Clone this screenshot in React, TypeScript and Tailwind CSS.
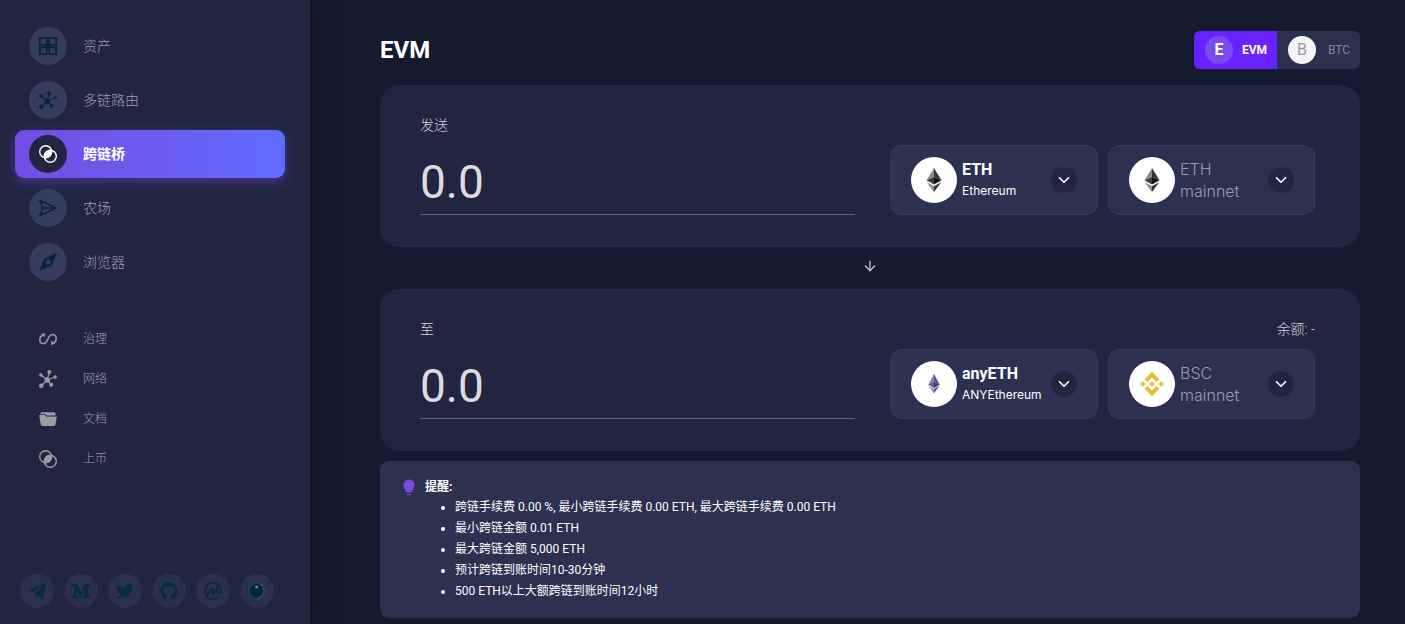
import { useState } from 'react';
import type { ReactNode } from 'react';
import { ArrowDown, ChevronDown } from 'lucide-react';
import { FaGithub, FaTelegramPlane, FaTwitter } from 'react-icons/fa';
import { SiBinance, SiCoinmarketcap } from 'react-icons/si';
import clsx from 'clsx';

const AssetsIcon = () => (
  <svg viewBox="0 0 18 18" className="w-[18px] h-[18px]" fill="none" stroke="currentColor" strokeWidth="1.7">
    <rect x="0.85" y="0.85" width="6.9" height="6.9" />
    <rect x="10.25" y="0.85" width="6.9" height="6.9" />
    <rect x="0.85" y="10.25" width="6.9" height="6.9" />
    <rect x="10.25" y="10.25" width="6.9" height="6.9" />
    <path d="M7.7 7.7L8.6 8.6M10.3 7.7L9.4 8.6M7.7 10.3L8.6 9.4M10.3 10.3L9.4 9.4" />
  </svg>
);

const NetworkIcon = () => (
  <svg viewBox="0 0 18 18" className="w-[18px] h-[18px]" fill="currentColor">
    <path
      d="M8.2 10L10.3 2M8.2 10L2 5M8.2 10L16 7M8.2 10L2.2 16M8.2 10L12.3 14.8"
      stroke="currentColor"
      strokeWidth="1.2"
    />
    <circle cx="8.2" cy="10" r="2.8" />
    <circle cx="10.3" cy="2" r="2" />
    <circle cx="1.9" cy="5" r="1.8" />
    <circle cx="16.2" cy="7" r="1.7" />
    <circle cx="2.2" cy="15.8" r="2.2" />
    <circle cx="12.3" cy="14.8" r="2" />
  </svg>
);

const BridgeIcon = () => (
  <svg viewBox="0 0 18 18" className="w-[18px] h-[18px]" fill="none" stroke="currentColor" strokeWidth="1.4">
    <circle cx="6.7" cy="6.7" r="6" />
    <circle cx="11.3" cy="11.3" r="6" />
    <path d="M5.4 12.6A6 6 0 0 1 12.6 5.4A6 6 0 0 1 5.4 12.6Z" fill="currentColor" stroke="none" />
  </svg>
);

const FarmIcon = () => (
  <svg viewBox="0 0 18 18" className="w-[18px] h-[18px]" fill="none" stroke="currentColor" strokeWidth="1.6" strokeLinejoin="round">
    <path d="M0.8 1.2L17.2 9L0.8 16.8L3.8 9Z" />
    <path d="M3.8 9H17" />
  </svg>
);

const CompassIcon = () => (
  <svg viewBox="0 0 18 18" className="w-[18px] h-[18px]" fill="currentColor">
    <path
      fillRule="evenodd"
      d="M18 0L12.8 12.4L0 18L5.2 5.6ZM9 6.5A2.5 2.5 0 1 0 9 11.5A2.5 2.5 0 1 0 9 6.5Z"
    />
  </svg>
);

const GovernanceIcon = () => (
  <svg viewBox="0 0 18 18" className="w-[18px] h-[18px]" fill="none" stroke="currentColor" strokeWidth="1.5">
    <path d="M4 5.2C1.9 5.8 0.8 7.6 0.8 9.6C0.8 12 2.4 13.7 4.5 13.7C9.4 13.7 8.4 4.5 13.4 4.5C15.7 4.5 17.2 6.3 17.2 8.7C17.2 10.9 16 12.4 14.2 12.9" />
    <path d="M2.6 4.2L6 3.6L5.2 6.8ZM12.4 11.2L15.8 13.2L12.6 14.8Z" fill="currentColor" strokeWidth="0.6" />
  </svg>
);

const FolderIcon = () => (
  <svg viewBox="0 0 18 18" className="w-[18px] h-[18px]" fill="currentColor">
    <path d="M1.5 4.6V3.6Q1.5 2.2 2.9 2.2H15Q16.6 2.2 16.6 3.8V5.4H7.4L6.2 4Z" />
    <path d="M0.2 5H5.8L7.2 6.4H17.8L16.4 14.6Q16.1 16 14.8 16H3.3Q2 16 1.7 14.6Z" />
  </svg>
);

const MediumIcon = () => (
  <svg viewBox="0 0 18 18" className="w-[18px] h-[18px]" fill="currentColor">
    <path d="M0 2H5.4L9 10.2L12.6 2H18V4.6H16V13.4H18V16H11V13.4H12.6V6.6L8.8 15.4H8L4.2 6.6V13.4H6V16H0V13.4H2V4.6H0Z" />
  </svg>
);

const OrbIcon = () => (
  <svg viewBox="0 0 18 18" className="w-[18px] h-[18px]">
    <circle cx="9" cy="9" r="8.4" fill="#123447" stroke="#2c4456" strokeWidth="0.9" />
    <circle cx="8.4" cy="8.6" r="6.4" fill="#06283c" />
    <path d="M14.8 5A7 7 0 0 1 9 16" fill="none" stroke="#35505f" strokeWidth="1.2" />
    <circle cx="8.6" cy="5" r="1.6" fill="#5f8590" />
    <circle cx="14" cy="3.4" r="0.8" fill="#4e6d7a" />
  </svg>
);

const BulbIcon = () => (
  <svg viewBox="0 0 12 17" className="w-3 h-[17px]" fill="#7749e0">
    <path d="M6 0.4A5.6 5.6 0 0 1 11.6 6C11.6 9 9.3 10.3 8.8 13.6H3.2C2.7 10.3 0.4 9 0.4 6A5.6 5.6 0 0 1 6 0.4Z" />
    <rect x="3.6" y="15" width="4.8" height="1.2" />
  </svg>
);

const EthLogo = () => (
  <svg viewBox="0 0 16 24" className="w-4 h-6">
    <path d="M8 0L0.5 12.3L8 9Z" fill="#8a8a8a" />
    <path d="M8 0L15.5 12.3L8 9Z" fill="#383838" />
    <path d="M0.5 12.3L8 9V16.6Z" fill="#3d3d3d" />
    <path d="M15.5 12.3L8 9V16.6Z" fill="#121212" />
    <path d="M0.5 14L8 18.3V24Z" fill="#8a8a8a" />
    <path d="M15.5 14L8 18.3V24Z" fill="#383838" />
  </svg>
);

const AnyEthLogo = () => (
  <svg viewBox="0 0 12 20" className="w-3 h-5">
    <path d="M6 0L0.2 10.4L6 7.8Z" fill="#8086ab" />
    <path d="M6 0L11.8 10.4L6 7.8Z" fill="#565b86" />
    <path d="M0.2 10.4L6 7.8V14Z" fill="#5b608a" />
    <path d="M11.8 10.4L6 7.8V14Z" fill="#3a3e68" />
    <path d="M0.2 11.4L6 14.8V19.6Z" fill="#8f94b8" />
    <path d="M11.8 11.4L6 14.8V19.6Z" fill="#5f648e" />
  </svg>
);

const mainLinks = [
  { id: 'assets', label: '资产', icon: <AssetsIcon /> },
  { id: 'router', label: '多链路由', icon: <NetworkIcon /> },
  { id: 'bridge', label: '跨链桥', icon: <BridgeIcon /> },
  { id: 'farm', label: '农场', icon: <FarmIcon /> },
  { id: 'explorer', label: '浏览器', icon: <CompassIcon /> },
];

const moreLinks = [
  { id: 'governance', label: '治理', icon: <GovernanceIcon /> },
  { id: 'network', label: '网络', icon: <NetworkIcon /> },
  { id: 'docs', label: '文档', icon: <FolderIcon /> },
  { id: 'listing', label: '上币', icon: <BridgeIcon /> },
];

const socials = [
  { name: 'Telegram', icon: <FaTelegramPlane size={20} /> },
  { name: 'Medium', icon: <MediumIcon /> },
  { name: 'Twitter', icon: <FaTwitter size={18} /> },
  { name: 'GitHub', icon: <FaGithub size={18} /> },
  { name: 'CoinMarketCap', icon: <SiCoinmarketcap size={18} /> },
  { name: 'Explorer', icon: <OrbIcon /> },
];

const reminders = [
  '跨链手续费 0.00 %, 最小跨链手续费 0.00 ETH, 最大跨链手续费 0.00 ETH',
  '最小跨链金额 0.01 ETH',
  '最大跨链金额 5,000 ETH',
  '预计跨链到账时间10-30分钟',
  '500 ETH以上大额跨链到账时间12小时',
];

const Sidebar = () => {
  const [active, setActive] = useState('bridge');

  return (
    <aside className="w-[310px] shrink-0 flex flex-col pt-[22px] pb-4 bg-[#212540] shadow-[0_0_30px_rgba(0,0,0,0.3)]">
      <nav className="flex flex-col px-[15px] mr-[10px]">
        <ul className="flex flex-col gap-1.5">
          {mainLinks.map(link => (
            <li key={link.id}>
              <a
                href={`#${link.id}`}
                onClick={() => setActive(link.id)}
                className={clsx(
                  'flex items-center gap-4 h-12 px-3.5 rounded-[9px] text-sm',
                  active === link.id
                    ? 'bg-gradient-to-r from-[#734ce2] to-[#606bff] text-white font-bold shadow-[0_4px_12px_rgba(115,76,226,0.45)]'
                    : 'font-light text-[#9c9fab]'
                )}
              >
                <span
                  className={clsx(
                    'flex items-center justify-center w-[38px] h-[38px] rounded-full',
                    active === link.id ? 'bg-[#212540] text-white' : 'bg-[#353c5e] text-[#062536]'
                  )}
                >
                  {link.icon}
                </span>
                {link.label}
              </a>
            </li>
          ))}
        </ul>
        <ul className="mt-[33px]">
          {moreLinks.map(link => (
            <li key={link.id}>
              <a href={`#${link.id}`} className="flex items-center gap-4 h-10 px-3.5 font-light text-xs text-[#9c9fab]">
                <span className="flex justify-center w-[38px] text-[#9a9ca3]">{link.icon}</span>
                {link.label}
              </a>
            </li>
          ))}
        </ul>
      </nav>
      <div className="flex gap-2.5 mt-auto px-5">
        {socials.map(social => (
          <a
            key={social.name}
            href="#"
            aria-label={social.name}
            className="flex items-center justify-center w-[34px] h-[34px] rounded-full bg-[#2b304d] text-[#062c40]"
          >
            {social.icon}
          </a>
        ))}
      </div>
    </aside>
  );
};

const ModeSwitch = ({ mode, onChange }: { mode: string; onChange: (mode: string) => void }) => (
  <div className="flex rounded-md overflow-hidden bg-[#2b304d]">
    {['EVM', 'BTC'].map(item => (
      <button
        key={item}
        type="button"
        onClick={() => onChange(item)}
        className={clsx(
          'flex items-center justify-between w-[83px] h-[38px] pl-[11px] pr-2.5 text-xs',
          mode === item ? 'bg-[#6822ff] text-white font-bold' : 'text-[#848792]'
        )}
      >
        <span
          className={clsx(
            'flex items-center justify-center w-7 h-7 rounded-full text-base',
            mode === item ? 'bg-[#7a4bea]' : 'bg-[#f5f5f7] text-[#9a9a9a]'
          )}
        >
          {item[0]}
        </span>
        {item}
      </button>
    ))}
  </div>
);

interface PickerProps {
  logo: ReactNode;
  title: string;
  subtitle: string;
  muted?: boolean;
}

const Picker = ({ logo, title, subtitle, muted }: PickerProps) => (
  <button
    type="button"
    aria-haspopup="listbox"
    className={clsx(
      'flex items-center h-[70px] px-5 rounded-xl border border-[#363d5e] bg-[#2b314f] text-left',
      muted ? 'w-[207px]' : 'w-[208px]'
    )}
  >
    <span className="flex items-center justify-center shrink-0 w-[46px] h-[46px] rounded-full bg-white">{logo}</span>
    <span className={clsx('flex-1 ml-[5px]', muted ? "font-['Inter'] font-light text-[#9a9cab]" : 'text-white')}>
      <span className={clsx('block text-base leading-[22px]', !muted && 'font-bold')}>{title}</span>
      <span className={clsx("block font-['Inter']", muted ? 'text-base leading-[22px]' : 'text-xs leading-5')}>
        {subtitle}
      </span>
    </span>
    <span className="flex items-center justify-center shrink-0 w-[26px] h-[26px] rounded-full bg-[#212540] text-white">
      <ChevronDown size={18} strokeWidth={2.2} />
    </span>
  </button>
);

interface AmountCardProps {
  id: string;
  label: string;
  balance?: string;
  children: ReactNode;
}

const AmountCard = ({ id, label, balance, children }: AmountCardProps) => (
  <section className="pt-[30px] pr-[45px] pb-8 pl-10 rounded-[20px] bg-[#212540]">
    <div className="flex justify-between font-light text-sm leading-5 text-[#d3d4da]">
      <label htmlFor={id}>{label}</label>
      {balance && <span>{balance}</span>}
    </div>
    <div className="flex gap-2.5 mt-2.5">
      <input
        id={id}
        type="text"
        inputMode="decimal"
        placeholder="0.0"
        className="flex-1 min-w-0 h-[70px] pt-1 mr-[25px] text-[46px] text-white placeholder:text-[#dcdcdf] bg-transparent border-b border-[#5d6484] outline-none"
      />
      {children}
    </div>
  </section>
);

const App = () => {
  const [mode, setMode] = useState('EVM');

  return (
    <div className="flex min-h-screen bg-[#151a2f] font-['Roboto','Noto_Sans_CJK_SC',sans-serif]">
      <Sidebar />
      <main className="flex-1 min-w-0 pt-[31px] pr-[45px] pb-1.5 pl-[70px]">
        <header className="flex items-center justify-between mb-4">
          <h1 className="text-2xl font-bold text-white">{mode}</h1>
          <ModeSwitch mode={mode} onChange={setMode} />
        </header>

        <AmountCard id="send" label="发送">
          <Picker logo={<EthLogo />} title="ETH" subtitle="Ethereum" />
          <Picker logo={<EthLogo />} title="ETH" subtitle="mainnet" muted />
        </AmountCard>

        <div className="flex justify-center pt-[11px] pb-[15px]">
          <button type="button" aria-label="切换" className="text-[#d0d2da]">
            <ArrowDown size={16} strokeWidth={1.8} />
          </button>
        </div>

        <AmountCard id="receive" label="至" balance="余额: -">
          <Picker logo={<AnyEthLogo />} title="anyETH" subtitle="ANYEthereum" />
          <Picker logo={<SiBinance size={24} color="#f0b93a" />} title="BSC" subtitle="mainnet" muted />
        </AmountCard>

        <section className="mt-2.5 py-4 px-[23px] rounded-[9px] bg-[#2b314f] text-xs text-white">
          <h2 className="flex items-center gap-2.5 h-5 font-bold">
            <BulbIcon />
            提醒:
          </h2>
          <ul className="pl-[52px] list-disc leading-[21px]">
            {reminders.map(text => (
              <li key={text}>{text}</li>
            ))}
          </ul>
        </section>
      </main>
    </div>
  );
};

export default App;
